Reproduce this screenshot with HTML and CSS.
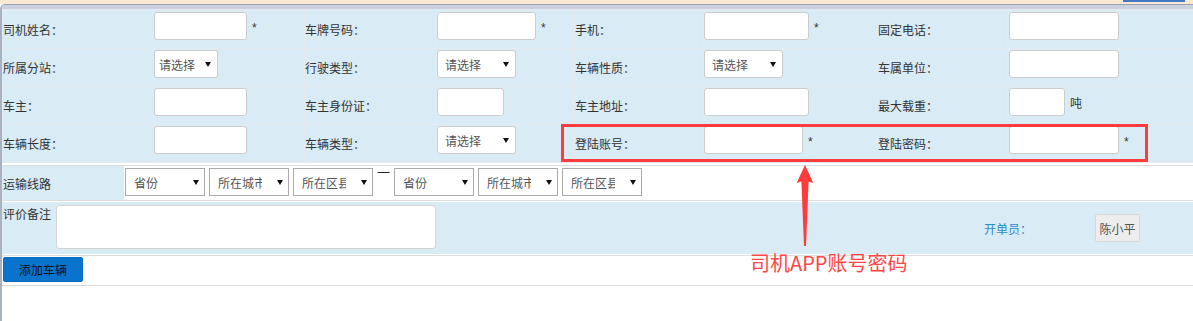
FILE: index.html
```html
<!DOCTYPE html>
<html lang="zh-CN">
<head>
<meta charset="utf-8">
<title>添加车辆</title>
<link rel="stylesheet" href="styles.css">
</head>
<body>
<div class="page">
  <div class="topstrip"><span class="topbar"></span></div>
  <div class="frame">
    <div class="band"></div>
    <div class="form">
      <div class="cell lbl first">司机姓名：</div>
      <div class="cell val r1"><input class="txt w93" type="text"><span class="req">*</span></div>
      <div class="cell lbl">车牌号码：</div>
      <div class="cell val r1 pl1"><input class="txt w99" type="text"><span class="req">*</span></div>
      <div class="cell lbl">手机：</div>
      <div class="cell val r1"><input class="txt w105" type="text"><span class="req">*</span></div>
      <div class="cell lbl">固定电话：</div>
      <div class="cell val r1 pl1 last"><input class="txt w110" type="text"></div>

      <div class="cell lbl first">所属分站：</div>
      <div class="cell val"><span class="sel sm"><select><option>请选择</option></select></span></div>
      <div class="cell lbl">行驶类型：</div>
      <div class="cell val pl1"><span class="sel"><select><option>请选择</option></select></span></div>
      <div class="cell lbl">车辆性质：</div>
      <div class="cell val"><span class="sel"><select><option>请选择</option></select></span></div>
      <div class="cell lbl">车属单位：</div>
      <div class="cell val pl1 last"><input class="txt w110" type="text"></div>

      <div class="cell lbl first">车主：</div>
      <div class="cell val"><input class="txt w93" type="text"></div>
      <div class="cell lbl">车主身份证：</div>
      <div class="cell val pl1"><input class="txt w67" type="text"></div>
      <div class="cell lbl">车主地址：</div>
      <div class="cell val"><input class="txt w105" type="text"></div>
      <div class="cell lbl">最大载重：</div>
      <div class="cell val pl1 last"><input class="txt w56" type="text"><span class="unit">吨</span></div>

      <div class="cell lbl first">车辆长度：</div>
      <div class="cell val"><input class="txt w93" type="text"></div>
      <div class="cell lbl">车辆类型：</div>
      <div class="cell val pl1"><span class="sel"><select><option>请选择</option></select></span></div>
      <div class="cell lbl">登陆账号：</div>
      <div class="cell val"><input class="txt w99" type="text"><span class="req">*</span></div>
      <div class="cell lbl">登陆密码：</div>
      <div class="cell val pl1 last"><input class="txt w110" type="password"><span class="req">*</span></div>
    </div>

    <div class="route">
      <div class="route-lbl">运输线路</div>
      <div class="route-sels">
        <span class="rsel"><select><option>省份</option></select></span>
        <span class="rsel"><select><option>所在城市</option></select></span>
        <span class="rsel"><select><option>所在区县</option></select></span>
        <span class="dash">一</span>
        <span class="rsel"><select><option>省份</option></select></span>
        <span class="rsel"><select><option>所在城市</option></select></span>
        <span class="rsel"><select><option>所在区县</option></select></span>
      </div>
    </div>

    <div class="remark">
      <div class="rm-lbl">评价备注</div>
      <div class="rm-ta"><textarea class="ta"></textarea></div>
      <div class="rm-blank"></div>
      <div class="rm-op">开单员：</div>
      <div class="rm-name"><span class="namebtn">陈小平</span></div>
    </div>

    <div class="actions">
      <button class="btn-add" type="button">添加车辆</button>
    </div>
  </div>

  <div class="annot-box"></div>
  <svg class="annot-arrow" width="22" height="88" viewBox="0 0 22 88" aria-hidden="true">
    <polygon points="10,3 18.3,21 13.6,19.5 11,84 9,84 6.4,19.5 1.7,21" fill="#ff3b3b"/>
  </svg>
  <div class="annot-text">司机APP账号密码</div>
</div>
</body>
</html>
```

FILE: styles.css
```css
* { box-sizing: border-box; }
html, body { margin: 0; height: 100%; }
body {
  font-family: "Noto Sans CJK SC", "Liberation Sans", sans-serif;
  font-size: 12px;
  color: #333;
  background: #fff;
}
.page {
  position: relative;
  display: flex;
  flex-direction: column;
  height: 100%;
  overflow: hidden;
}
.topstrip {
  height: 4px;
  flex: none;
  background: #fce9d3;
  display: flex;
  justify-content: flex-end;
  padding-right: 8px;
}
.topbar { width: 62px; height: 2px; background: #4177c6; }
.frame {
  flex: 1;
  border-left: 2px solid #aab1c1;
  border-top: 1px solid #98a0b2;
  border-top-left-radius: 5px;
  overflow: hidden;
}
.band {
  height: 5px;
  background: #cbd1de;
  border-bottom: 1px solid #e4e8ee;
}

/* main form grid */
.form {
  display: grid;
  grid-template-columns: 152px 151px 131px 139px 129px 174px 130px 1fr;
  grid-template-rows: 39px 38px 38px 38px;
  background: #d9ebf5;
}
.cell {
  border-right: 1px solid #e6eaee;
  border-bottom: 1px solid #e6eaee;
  white-space: nowrap;
}
.cell.last { border-right: none; }
.lbl {
  display: flex;
  align-items: center;
  padding-left: 0;
}
.lbl.first { padding-left: 1px; }
.val { padding-top: 1px; }
.val.r1 { padding-top: 2px; }
.val.pl1 { padding-left: 1px; }

.txt {
  height: 28px;
  border: 1px solid #ccc;
  border-radius: 3px;
  background: #fff;
  padding: 0 6px;
  font: inherit;
  color: #333;
  vertical-align: baseline;
}
.w56 { width: 56px; }
.w67 { width: 67px; }
.w93 { width: 93px; }
.w99 { width: 99px; }
.w105 { width: 105px; }
.w110 { width: 110px; }
.req { margin-left: 5px; color: #333; font-family: "Liberation Sans", sans-serif; }
.unit { margin-left: 5px; }

.sel {
  position: relative;
  display: inline-block;
  vertical-align: baseline;
}
.sel select {
  -webkit-appearance: none;
  appearance: none;
  width: 79px;
  height: 28px;
  border: 1px solid #ccc;
  border-radius: 3px;
  background: #fff;
  font: inherit;
  color: #555;
  padding: 0 20px 0 7px;
  outline: none;
}
.sel.sm select { width: 64px; padding-left: 4px; }
.sel::after,
.rsel::after {
  content: "";
  position: absolute;
  top: 50%;
  width: 6px;
  height: 5px;
  margin-top: -2px;
  background: #111;
  clip-path: polygon(0 0, 100% 0, 50% 100%);
  pointer-events: none;
}
.sel::after { right: 7px; }

/* route row */
.route {
  margin-top: 2px;
  height: 36px;
  border-top: 1px solid #dcdcdc;
  border-bottom: 1px solid #dcdcdc;
  display: flex;
}
.route-lbl {
  width: 122px;
  background: #d9ebf5;
  display: flex;
  align-items: center;
  padding-left: 1px;
}
.route-sels {
  display: flex;
  align-items: flex-start;
  padding: 2px 0 0 1px;
}
.rsel {
  position: relative;
  display: block;
  margin-right: 4px;
}
.rsel select {
  -webkit-appearance: none;
  appearance: none;
  display: block;
  width: 80px;
  height: 28px;
  border: 1px solid #aaa;
  border-radius: 0;
  background: #fff;
  font: inherit;
  color: #555;
  padding: 0 26px 0 8px;
  outline: none;
}
.rsel::after { right: 6px; }
.dash {
  width: 13px;
  margin-right: 4px;
  margin-top: -3px;
  font-size: 13px;
  line-height: 13px;
  color: #222;
}

/* remark row */
.remark {
  margin: 1px 0;
  height: 52px;
  background: #d9ebf5;
  display: grid;
  grid-template-columns: 54px 380px 548px 110px 1fr;
}
.rm-lbl { padding: 3px 0 0 1px; }
.rm-ta { padding-top: 3px; }
.ta {
  display: block;
  width: 380px;
  height: 44px;
  border: 1px solid #d4d4d4;
  border-radius: 3px;
  background: #fff;
  resize: none;
  font: inherit;
}
.rm-blank { border-right: 1px solid #e3e8ec; }
.rm-op {
  border-right: 1px solid #e3e8ec;
  display: flex;
  align-items: center;
  color: #2a8bcf;
}
.rm-name {
  display: flex;
  align-items: center;
  padding-left: 1px;
}
.namebtn {
  display: inline-flex;
  align-items: center;
  justify-content: center;
  width: 45px;
  height: 28px;
  background: #ededed;
  border: 1px solid #d6d6d6;
  border-radius: 2px;
  color: #555;
}

/* actions row */
.actions {
  height: 31px;
  border-top: 1px solid #dcdcdc;
  border-bottom: 1px solid #dcdcdc;
  padding: 1px 0 0 1px;
}
.btn-add {
  display: block;
  width: 80px;
  height: 25px;
  border: 1px solid #0a6cc0;
  border-radius: 2px;
  background: #0a74cc;
  color: #111;
  font: inherit;
  padding: 0;
}

/* annotation overlay */
.annot-box {
  position: absolute;
  left: 561px;
  top: 124px;
  width: 587px;
  height: 38px;
  border: 3px solid #ff3b3b;
  pointer-events: none;
}
.annot-arrow {
  position: absolute;
  left: 795px;
  top: 162px;
}
.annot-text {
  position: absolute;
  left: 750px;
  top: 253px;
  font-size: 20px;
  line-height: 20px;
  color: #ff4646;
  white-space: nowrap;
}
```
